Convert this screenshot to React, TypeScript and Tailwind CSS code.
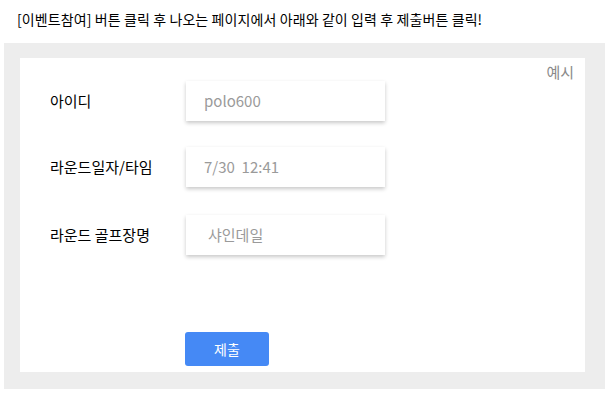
const rows = [
  { label: "아이디", value: "polo600", indent: "pl-[18px]" },
  { label: "라운드일자/타임", value: "7/30  12:41", indent: "pl-[18px]" },
  { label: "라운드 골프장명", value: "샤인데일", indent: "pl-[22px]" },
];

export default function App() {
  return (
    <div className="h-[396px] w-[614px] bg-white font-['Noto_Sans_CJK_KR','Noto_Sans',sans-serif] text-black">
      <p className="pl-[17px] pt-[9px] text-[14px] leading-[20px] tracking-[0.1px] whitespace-pre">
        [이벤트참여] 버튼 클릭 후 나오는 페이지에서 아래와 같이 입력 후 제출버튼 클릭!
      </p>
      <div className="mx-[4px] mt-[14px] w-[601px] bg-[#ededed] px-[16px] pb-[17px] pt-[15px]">
        <div className="relative h-[314px] w-[565px] bg-white">
          <span className="absolute right-[11px] top-[4px] text-[15px] leading-[20px] text-[#8a8a8a]">예시</span>
          <div className="flex flex-col pt-[23px]">
            {rows.map((r, i) => (
              <div
                key={r.label}
                className={
                  i === 0 ? "flex items-center" : i === 1 ? "mt-[26px] flex items-center" : "mt-[28px] flex items-center"
                }
              >
                <span className="w-[166px] pl-[30px] text-[15px] leading-[20px] whitespace-pre">{r.label}</span>
                <div
                  className={`flex h-[40px] w-[199px] items-center ${r.indent} text-[15px] whitespace-pre text-[#9a9a9a] shadow-[0_2px_4px_rgba(0,0,0,0.22)]`}
                >
                  {r.value}
                </div>
              </div>
            ))}
          </div>
          <div className="pl-[165px] pt-[77px]">
            <button className="flex h-[34px] w-[84px] items-center justify-center rounded-[3px] bg-[#4589f5] text-[14px] text-white">
              제출
            </button>
          </div>
        </div>
      </div>
    </div>
  );
}
